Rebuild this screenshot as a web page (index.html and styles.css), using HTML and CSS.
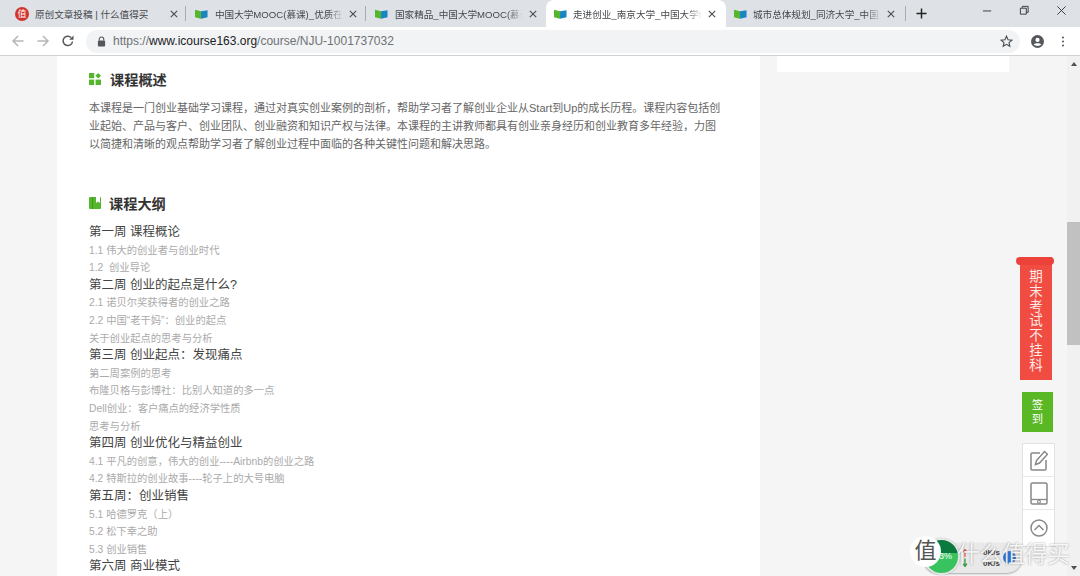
FILE: index.html
```html
<!DOCTYPE html>
<html lang="zh-CN">
<head>
<meta charset="UTF-8">
<meta name="viewport" content="width=device-width, initial-scale=1.0">
<title>走进创业_南京大学_中国大学MOOC</title>
<link rel="stylesheet" href="styles.css">
</head>
<body>
<svg class="defs" width="0" height="0">
  <symbol id="mooc" viewBox="0 0 14 10">
    <path d="M0 0.5 L6.5 2 V10 L0 8.5 Z" fill="#55b52c"/>
    <path d="M6.5 2 L13.5 1 V8.5 L6.5 10 Z" fill="#1a86c0"/>
  </symbol>
  <symbol id="x" viewBox="0 0 10 10">
    <path d="M1 1 L9 9 M9 1 L1 9" stroke="#4a4d52" stroke-width="1.4" fill="none"/>
  </symbol>
</svg>

<div class="tabstrip">
  <div class="tab tab-first">
    <span class="zdm-icon">值</span>
    <span class="tab-title">原创文章投稿 | 什么值得买</span>
    <svg class="tab-x"><use href="#x"/></svg>
  </div>
  <div class="tab">
    <svg class="favicon"><use href="#mooc"/></svg>
    <span class="tab-title tab-fade">中国大学MOOC(慕课)_优质在线课程学习平台</span>
    <svg class="tab-x"><use href="#x"/></svg>
  </div>
  <div class="tab tab-before-active">
    <svg class="favicon"><use href="#mooc"/></svg>
    <span class="tab-title tab-fade">国家精品_中国大学MOOC(慕课)</span>
    <svg class="tab-x"><use href="#x"/></svg>
  </div>
  <div class="tab tab-active">
    <svg class="favicon"><use href="#mooc"/></svg>
    <span class="tab-title tab-fade">走进创业_南京大学_中国大学MOOC</span>
    <svg class="tab-x"><use href="#x"/></svg>
  </div>
  <div class="tab tab-last">
    <svg class="favicon"><use href="#mooc"/></svg>
    <span class="tab-title tab-fade">城市总体规划_同济大学_中国大学MOOC</span>
    <svg class="tab-x"><use href="#x"/></svg>
  </div>
  <svg class="new-tab" viewBox="0 0 12 12"><path d="M6 0.5 V11.5 M0.5 6 H11.5" stroke="#222" stroke-width="1.6"/></svg>
  <div class="win-controls">
    <svg viewBox="0 0 12 12"><path d="M1 6.5 H10" stroke="#333" stroke-width="1"/></svg>
    <svg viewBox="0 0 12 12"><path d="M3.5 3 V1.5 H10 V8 H8 M1.5 3.5 H8 V10 H1.5 Z" stroke="#333" stroke-width="1" fill="none"/></svg>
    <svg viewBox="0 0 12 12"><path d="M1.5 1.5 L10.5 10.5 M10.5 1.5 L1.5 10.5" stroke="#333" stroke-width="1" fill="none"/></svg>
  </div>
</div>

<div class="toolbar">
  <svg class="nav-icon" viewBox="0 0 12 12"><path d="M11.5 6 H1 M6 1 L1 6 L6 11" stroke="#b4b6b9" stroke-width="1.5" fill="none"/></svg>
  <svg class="nav-icon" viewBox="0 0 12 12"><path d="M0.5 6 H11 M6 1 L11 6 L6 11" stroke="#b4b6b9" stroke-width="1.5" fill="none"/></svg>
  <svg class="nav-icon" viewBox="0 0 12 12"><path d="M10.5 6.5 A4.7 4.7 0 1 1 9.1 2.5" stroke="#54575b" stroke-width="1.5" fill="none"/><path d="M11.5 0.5 V4.8 H7.2 Z" fill="#54575b"/></svg>
  <div class="omnibox">
    <svg class="lock" viewBox="0 0 10 12"><path d="M2.5 5 V3.5 A2.5 2.5 0 0 1 7.5 3.5 V5" stroke="#54575b" stroke-width="1.2" fill="none"/><rect x="1" y="5" width="8" height="6.5" rx="1" fill="#54575b"/></svg>
    <span class="url"><span class="url-dim">https://</span>www.icourse163.org<span class="url-dim">/course/NJU-1001737032</span></span>
    <svg class="star" viewBox="0 0 14 14"><path d="M7 1.3 L8.7 5.1 L12.8 5.5 L9.7 8.2 L10.6 12.2 L7 10.1 L3.4 12.2 L4.3 8.2 L1.2 5.5 L5.3 5.1 Z" stroke="#4a4d52" stroke-width="1.2" fill="none"/></svg>
  </div>
  <svg class="profile" viewBox="0 0 16 16"><circle cx="8" cy="8" r="8" fill="#54575b"/><circle cx="8" cy="6" r="2.6" fill="#fff"/><path d="M3.2 11.8 C5 9.4 11 9.4 12.8 11.8 C10.5 14 5.5 14 3.2 11.8 Z" fill="#fff"/></svg>
  <svg class="menu" viewBox="0 0 4 14"><circle cx="2" cy="2" r="1.3" fill="#54575b"/><circle cx="2" cy="7" r="1.3" fill="#54575b"/><circle cx="2" cy="12" r="1.3" fill="#54575b"/></svg>
</div>

<div class="viewport">
  <div class="page">
    <main class="content">
      <section class="intro">
        <h2 class="section-title">
          <svg class="sec-icon" viewBox="0 0 12 12"><rect width="5.2" height="5.2" fill="#55b52c"/><rect y="6.6" width="5.2" height="5.4" fill="#55b52c"/><rect x="6.6" y="6.6" width="5.4" height="5.4" fill="#55b52c"/><path d="M9.2 0 L12 2.8 L9.2 5.6 L6.4 2.8 Z" fill="#55b52c"/></svg>
          课程概述
        </h2>
        <p class="summary">本课程是一门创业基础学习课程，通过对真实创业案例的剖析，帮助学习者了解创业企业从Start到Up的成长历程。课程内容包括创业起始、产品与客户、创业团队、创业融资和知识产权与法律。本课程的主讲教师都具有创业亲身经历和创业教育多年经验，力图以简捷和清晰的观点帮助学习者了解创业过程中面临的各种关键性问题和解决思路。</p>
      </section>
      <section class="outline">
        <h2 class="section-title">
          <svg class="sec-icon" viewBox="0 0 12 12"><rect width="12" height="12" rx="1" fill="#55b52c"/><rect x="3" width="1" height="12" fill="#3d9a1c"/><path d="M7 0 H11 V6 L9 4.5 L7 6 Z" fill="#fff"/></svg>
          课程大纲
        </h2>
        <div class="week">第一周 课程概论</div>
        <div class="lesson">1.1 伟大的创业者与创业时代</div>
        <div class="lesson">1.2&nbsp; 创业导论</div>
        <div class="week">第二周 创业的起点是什么?</div>
        <div class="lesson">2.1 诺贝尔奖获得者的创业之路</div>
        <div class="lesson">2.2 中国“老干妈”：创业的起点</div>
        <div class="lesson">关于创业起点的思考与分析</div>
        <div class="week">第三周 创业起点：发现痛点</div>
        <div class="lesson">第二周案例的思考</div>
        <div class="lesson">布隆贝格与彭博社：比别人知道的多一点</div>
        <div class="lesson">Dell创业：客户痛点的经济学性质</div>
        <div class="lesson">思考与分析</div>
        <div class="week">第四周 创业优化与精益创业</div>
        <div class="lesson">4.1 平凡的创意，伟大的创业----Airbnb的创业之路</div>
        <div class="lesson">4.2 特斯拉的创业故事----轮子上的大号电脑</div>
        <div class="week">第五周：创业销售</div>
        <div class="lesson">5.1 哈德罗克（上）</div>
        <div class="lesson">5.2 松下幸之助</div>
        <div class="lesson">5.3 创业销售</div>
        <div class="week">第六周 商业模式</div>
      </section>
    </main>
    <aside class="sidebar"></aside>
  </div>
  <div class="scrollbar">
    <span class="arrow-up"></span>
    <div class="track"><div class="thumb"></div></div>
    <span class="arrow-down"></span>
  </div>

  <div class="float-rail">
    <div class="exam-tag">
      <span class="exam-cap"></span>
      <span class="exam-text">期末考试不挂科</span>
    </div>
    <div class="signin">签<br>到</div>
    <div class="tools">
      <div class="tool">
        <svg class="tool-edit" viewBox="0 0 18 21"><path d="M10 3 H2 A1 1 0 0 0 1 4 V19 A1 1 0 0 0 2 20 H15 A1 1 0 0 0 16 19 V10" stroke="#888" stroke-width="1.5" fill="none"/><path d="M5.5 14.5 L6.5 10.5 L14.5 1.5 L17.5 4.2 L9.5 13 Z" stroke="#888" stroke-width="1.5" fill="none"/></svg>
      </div>
      <div class="tool">
        <svg class="tool-pad" viewBox="0 0 18 23"><rect x="1" y="1" width="16" height="21" rx="1.5" stroke="#888" stroke-width="1.5" fill="none"/><path d="M1 17.5 H17" stroke="#888" stroke-width="1.3"/><circle cx="9" cy="19.7" r="1.4" stroke="#888" stroke-width="1.1" fill="none"/></svg>
      </div>
      <div class="tool tool-last">
        <svg class="tool-top" viewBox="0 0 18 18"><circle cx="9" cy="9" r="8" stroke="#888" stroke-width="1.5" fill="none"/><path d="M4.5 11 L9 6.5 L13.5 11" stroke="#888" stroke-width="1.5" fill="none"/></svg>
      </div>
    </div>
  </div>

  <div class="net-widget">
    <div class="net-ball">
      <span class="net-percent">3%</span>
    </div>
    <svg class="net-arrows" viewBox="0 0 6 18"><path d="M3 8 V1 M1 3 L3 0.5 L5 3" stroke="#e2574c" stroke-width="1.2" fill="none"/><path d="M3 9.5 V17 M1 14.5 L3 17.5 L5 14.5" stroke="#2e9b46" stroke-width="1.3" fill="none"/></svg>
    <div class="net-speed"><span>0K/s</span><span>0K/s</span></div>
    <span class="net-dot"></span>
  </div>

  <div class="watermark">
    <span class="wm-badge">值</span>
    <span class="wm-text">什么值得买</span>
  </div>
</div>
</body>
</html>
```

FILE: styles.css
```css
* {
  box-sizing: border-box;
}

html, body {
  margin: 0;
  padding: 0;
  height: 576px;
  overflow: hidden;
}

body {
  font-family: "Liberation Sans", "Noto Sans CJK SC", sans-serif;
  background-color: #f5f5f5;
  color: #333;
}

.defs {
  position: absolute;
}

/* tabs */
.tabstrip {
  display: flex;
  align-items: stretch;
  height: 27px;
  background-color: #dee1e6;
}

.tab {
  display: flex;
  align-items: center;
  width: 180px;
  padding: 0 9px;
  position: relative;
  font-size: 9.6px;
  color: #45484c;
}

.tab::after {
  content: "";
  position: absolute;
  right: 0;
  top: 6px;
  bottom: 6px;
  width: 1px;
  background-color: #a9acb0;
}

.tab-first {
  width: 186px;
  padding: 0 8px 0 15px;
}

.tab-before-active::after,
.tab-active::after {
  display: none;
}

.tab-active {
  background-color: #fff;
  border-radius: 8px 8px 0 0;
  padding: 0 10px 0 8px;
}

.tab-last {
  padding: 0 11px 0 8px;
}

.favicon {
  width: 13px;
  height: 10px;
  flex: none;
  margin-right: 7px;
}

.tab-active .favicon,
.tab-last .favicon {
  margin-right: 6px;
}

.zdm-icon {
  width: 14px;
  height: 14px;
  flex: none;
  border-radius: 50%;
  background-color: #d0342c;
  color: #fff;
  font-size: 9px;
  line-height: 14px;
  text-align: center;
  margin-right: 6px;
}

.tab-title {
  flex: 1;
  white-space: nowrap;
  overflow: hidden;
}

.tab-fade {
  -webkit-mask-image: linear-gradient(to right, #000 88%, transparent);
  mask-image: linear-gradient(to right, #000 88%, transparent);
}

.tab-x {
  width: 8px;
  height: 8px;
  flex: none;
  margin-left: 6px;
}

.new-tab {
  width: 11px;
  height: 11px;
  align-self: center;
  margin-left: 10px;
}

.win-controls {
  margin-left: auto;
  display: flex;
  align-items: center;
  gap: 26px;
  padding: 0 13px 6px 0;
}

.win-controls svg {
  width: 11px;
  height: 11px;
}

/* address bar */
.toolbar {
  display: flex;
  align-items: center;
  height: 29px;
  background-color: #fff;
  border-bottom: 1px solid #d0d1d3;
  padding: 0 0 0 12px;
}

.nav-icon {
  width: 12px;
  height: 12px;
  margin-right: 13px;
}

.omnibox {
  display: flex;
  align-items: center;
  width: 934px;
  height: 23px;
  margin-left: -1px;
  padding: 0 7px 0 11px;
  background-color: #f1f3f4;
  border-radius: 12px;
}

.lock {
  width: 9px;
  height: 11px;
  margin-right: 7px;
}

.url {
  font-size: 12px;
  color: #202124;
}

.url-dim {
  color: #6f7276;
}

.star {
  width: 13px;
  height: 13px;
  margin-left: auto;
}

.profile {
  width: 13px;
  height: 13px;
  margin-left: 11px;
}

.menu {
  width: 4px;
  height: 11px;
  margin-left: 17px;
}

/* page */
.viewport {
  display: flex;
  height: 520px;
  position: relative;
  overflow: hidden;
}

.page {
  flex: 1;
  display: flex;
  align-items: flex-start;
  padding-left: 57px;
}

.content {
  width: 703px;
  height: 520px;
  background-color: #fff;
  padding: 0 32px;
  overflow: hidden;
}

.sidebar {
  width: 232px;
  height: 16px;
  margin-left: 17px;
  background-color: #fff;
}

.section-title {
  display: flex;
  align-items: center;
  gap: 8px;
  margin: 0;
  font-size: 14.2px;
  font-weight: bold;
  color: #333;
  height: 20px;
}

.sec-icon {
  width: 12px;
  height: 12px;
  flex: none;
}

.intro {
  padding-top: 13px;
  height: 137px;
}

.intro .section-title {
  gap: 9px;
}

.summary {
  margin: 10px 0 0;
  max-width: 637px;
  font-size: 11px;
  line-height: 18px;
  color: #666;
}

.week {
  font-size: 12.5px;
  line-height: 17.6px;
  color: #444;
}

.lesson {
  font-size: 10.3px;
  line-height: 17.6px;
  color: #aaa;
}

.outline .section-title {
  margin-bottom: 11px;
}

/* scrollbar */
.scrollbar {
  width: 13px;
  flex: none;
  background-color: #f1f1f1;
  display: flex;
  flex-direction: column;
  align-items: center;
}

.arrow-up {
  margin-top: 6px;
  border: 3px solid transparent;
  border-top: 0;
  border-bottom: 4px solid #505050;
}

.track {
  flex: 1;
  width: 100%;
  margin-top: 5px;
}

.thumb {
  height: 123px;
  margin-top: 151px;
  background-color: #c1c1c1;
}

.arrow-down {
  margin-bottom: 6px;
  border: 3px solid transparent;
  border-bottom: 0;
  border-top: 4px solid #505050;
}

/* floating rail on the right */
.float-rail {
  position: absolute;
  left: 1016px;
  top: 201px;
  display: flex;
  flex-direction: column;
  align-items: flex-start;
}

.exam-tag {
  width: 32px;
  height: 123px;
  margin-left: 4px;
  background-color: #f04c41;
  color: #ffe9e6;
  position: relative;
  display: flex;
  justify-content: center;
  padding-top: 13px;
}

.exam-cap {
  position: absolute;
  top: 0;
  left: -4px;
  right: -2px;
  height: 8px;
  border-radius: 4px;
  background-color: #ec4239;
}

.exam-text {
  width: 14px;
  font-size: 13.5px;
  line-height: 14.8px;
  text-align: center;
}

.signin {
  width: 31px;
  height: 40px;
  margin: 12px 0 0 6px;
  padding-top: 6px;
  background-color: #5ab825;
  color: #fff;
  font-size: 11.3px;
  line-height: 14px;
  text-align: center;
}

.tools {
  width: 33px;
  margin: 11px 0 0 6px;
  background-color: #fff;
  border: 1px solid #e2e2e2;
}

.tool {
  height: 33px;
  display: flex;
  align-items: center;
  justify-content: center;
  border-bottom: 1px solid #e8e8e8;
}

.tool-last {
  height: 36px;
  border-bottom: 0;
}

.tool-edit {
  width: 18px;
  height: 21px;
}

.tool-pad {
  width: 18px;
  height: 23px;
}

.tool-top {
  width: 18px;
  height: 18px;
}

/* net speed widget */
.net-widget {
  position: absolute;
  left: 923px;
  top: 487px;
  width: 99px;
  height: 30px;
  display: flex;
  align-items: center;
  padding-left: 38px;
  background-color: #e9e9e9;
  border-radius: 15px;
  box-shadow: 0 1px 2px rgba(0, 0, 0, 0.3);
}

.net-ball {
  position: absolute;
  left: 0;
  top: -5px;
  width: 37px;
  height: 37px;
  border-radius: 50%;
  border: 2px solid #e6e6e6;
  box-shadow: 0 0 1px rgba(0, 0, 0, 0.5);
  background: linear-gradient(#0b7a3e 0 38%, #39c35f 38%);
  color: #fff;
  font-size: 9px;
  line-height: 33px;
  text-align: center;
}

.net-percent {
  margin-left: 8px;
}

.net-arrows {
  width: 6px;
  height: 18px;
  margin-left: 1px;
}

.net-speed {
  display: flex;
  flex-direction: column;
  margin-left: 15px;
  font-size: 8px;
  line-height: 11px;
  font-weight: bold;
  color: #444;
}

.net-dot {
  position: absolute;
  right: 6px;
  top: 8px;
  width: 13px;
  height: 13px;
  border-radius: 50%;
  background-color: #2d74d6;
}

/* site watermark */
.watermark {
  position: absolute;
  left: 910px;
  top: 477px;
  display: flex;
  align-items: center;
}

.wm-badge {
  width: 31px;
  height: 31px;
  border-radius: 50%;
  background-color: #fff;
  color: #555;
  font-size: 22px;
  line-height: 30px;
  text-align: center;
}

.wm-text {
  margin: 3px 0 0 16px;
  font-size: 22.6px;
  color: rgba(255, 255, 255, 0.9);
  text-shadow: 0 0 2px rgba(70, 70, 70, 0.55);
}
```
